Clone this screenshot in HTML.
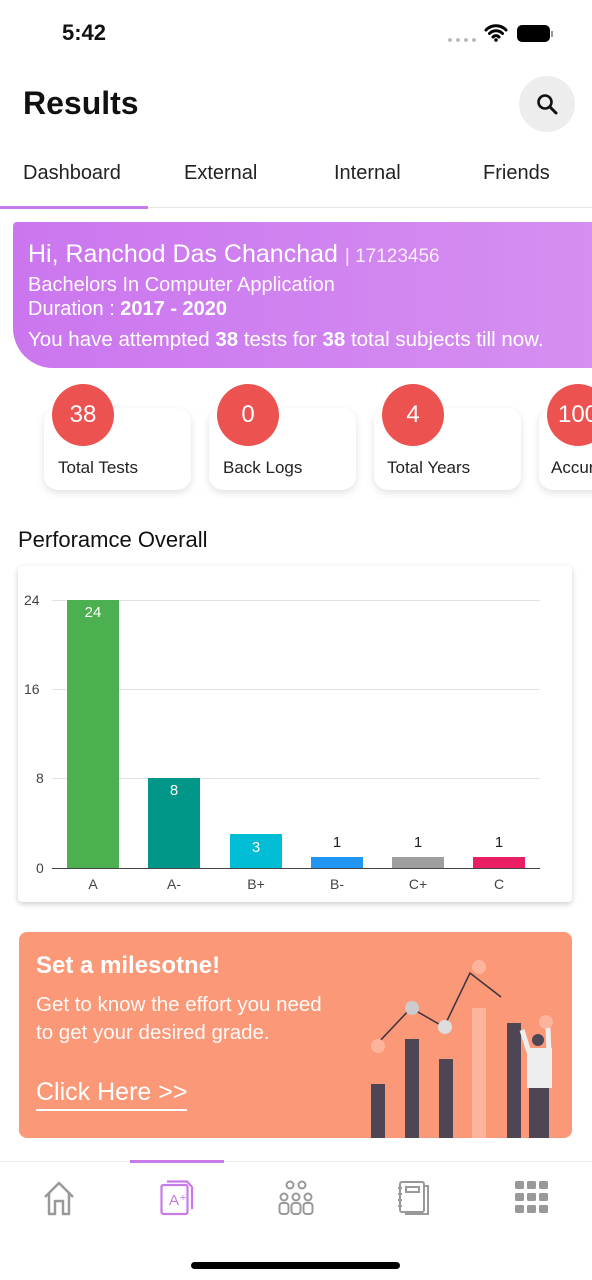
<!DOCTYPE html>
<html><head><meta charset="utf-8"><style>
*{margin:0;padding:0;box-sizing:border-box}
body{width:592px;height:1280px;background:#fff;font-family:"Liberation Sans",sans-serif;position:relative;overflow:hidden;color:#111}
.a{position:absolute}
.tab{position:absolute;top:162px;font-size:20px;color:#222}
.card{position:absolute;top:408px;width:147px;height:82px;background:#fff;border-radius:14px;box-shadow:0 3px 8px rgba(0,0,0,.12)}
.circ{position:absolute;top:384px;width:62px;height:62px;border-radius:50%;background:#ec524f;color:#fff;font-size:24px;text-align:center;line-height:62px}
.lbl{position:absolute;top:458px;font-size:17px;color:#222}
.gl{position:absolute;left:52px;width:488px;height:1px;background:#e2e2e2}
.yl{position:absolute;left:24px;font-size:14px;color:#444}
.bar{position:absolute;width:52px}
.bv{position:absolute;width:52px;text-align:center;font-size:15px;color:#222}
.xl{position:absolute;top:876px;width:52px;text-align:center;font-size:14px;color:#444}
</style></head><body>
<div class="a" style="left:62px;top:20px;font-size:22px;font-weight:bold">5:42</div>
<div class="a" style="left:448px;top:38px;width:28px;height:4px;border-top:4px dotted #bbb"></div>
<svg class="a" style="left:484px;top:24px" width="24" height="18" viewBox="0 0 24 18"><path d="M2 6a14 14 0 0 1 20 0M5.5 9.5a9 9 0 0 1 13 0M9 13a4 4 0 0 1 6 0" stroke="#000" stroke-width="3" fill="none" stroke-linecap="round"/><circle cx="12" cy="16" r="1.8"/></svg>
<div class="a" style="left:517px;top:25px;width:33px;height:17px;border-radius:5px;background:#000"></div>
<div class="a" style="left:551px;top:31px;width:2px;height:6px;background:#999"></div>
<div class="a" style="left:23px;top:85px;font-size:32px;font-weight:bold">Results</div>
<div class="a" style="left:519px;top:76px;width:56px;height:56px;border-radius:50%;background:#ededed"></div>
<svg class="a" style="left:535px;top:92px" width="24" height="24" viewBox="0 0 24 24"><circle cx="10" cy="10" r="6.5" stroke="#111" stroke-width="2.6" fill="none"/><path d="M15 15l6 6" stroke="#111" stroke-width="3" stroke-linecap="round"/></svg>
<div class="tab" style="left:23px">Dashboard</div>
<div class="tab" style="left:184px">External</div>
<div class="tab" style="left:334px">Internal</div>
<div class="tab" style="left:483px">Friends</div>
<div class="a" style="left:0;top:207px;width:592px;height:1px;background:#e5e5e5"></div>
<div class="a" style="left:0;top:206px;width:148px;height:3px;background:#c77be8"></div>
<div class="a" style="left:13px;top:222px;width:579px;height:146px;background:linear-gradient(90deg,#cb76ef,#d58ff0);border-radius:4px 0 0 40px;color:#fff">
<div class="a" style="left:15px;top:18px;font-size:25px;white-space:nowrap">Hi, Ranchod Das Chanchad <span style="font-size:19px;opacity:.85">| 17123456</span></div>
<div class="a" style="left:15px;top:52px;font-size:20px;opacity:.95;white-space:nowrap">Bachelors In Computer Application</div>
<div class="a" style="left:15px;top:76px;font-size:20px;white-space:nowrap">Duration : <b>2017 - 2020</b></div>
<div class="a" style="left:15px;top:106px;font-size:20.5px;white-space:nowrap">You have attempted <b>38</b> tests for <b>38</b> total subjects till now.</div>
</div>
<div class="card" style="left:44px"></div><div class="card" style="left:209px"></div><div class="card" style="left:374px"></div><div class="card" style="left:539px"></div>
<div class="circ" style="left:52px">38</div><div class="circ" style="left:217px">0</div><div class="circ" style="left:382px">4</div><div class="circ" style="left:547px">100</div>
<div class="lbl" style="left:58px">Total Tests</div><div class="lbl" style="left:223px">Back Logs</div><div class="lbl" style="left:387px">Total Years</div><div class="lbl" style="left:551px">Accuracy</div>
<div class="a" style="left:18px;top:527px;font-size:22px">Perforamce Overall</div>
<div class="a" style="left:18px;top:566px;width:554px;height:336px;background:#fff;border-radius:4px;box-shadow:0 2px 6px rgba(0,0,0,.2)"></div>
<div class="gl" style="top:600px"></div><div class="gl" style="top:689px"></div><div class="gl" style="top:778px"></div>
<div class="a" style="left:52px;top:868px;width:488px;height:1px;background:#444"></div>
<div class="yl" style="top:592px">24</div><div class="yl" style="top:681px">16</div><div class="yl" style="top:770px;left:36px">8</div><div class="yl" style="top:860px;left:36px">0</div>
<div class="bar" style="left:67px;top:600px;height:268px;background:#4caf50"></div>
<div class="bar" style="left:148px;top:778px;height:90px;background:#009688"></div>
<div class="bar" style="left:230px;top:834px;height:34px;background:#00bcd4"></div>
<div class="bar" style="left:311px;top:857px;height:11px;background:#2196f3"></div>
<div class="bar" style="left:392px;top:857px;height:11px;background:#9e9e9e"></div>
<div class="bar" style="left:473px;top:857px;height:11px;background:#e91e63"></div>
<div class="bv" style="left:67px;top:604px;color:#fff">24</div>
<div class="bv" style="left:148px;top:782px;color:#fff">8</div>
<div class="bv" style="left:230px;top:839px;color:#fff">3</div>
<div class="bv" style="left:311px;top:834px">1</div><div class="bv" style="left:392px;top:834px">1</div><div class="bv" style="left:473px;top:834px">1</div>
<div class="xl" style="left:67px">A</div><div class="xl" style="left:148px">A-</div><div class="xl" style="left:230px">B+</div><div class="xl" style="left:311px">B-</div><div class="xl" style="left:392px">C+</div><div class="xl" style="left:473px">C</div>
<div class="a" style="left:19px;top:932px;width:553px;height:206px;background:#fa9877;border-radius:8px;overflow:hidden;color:#fff">
<div class="a" style="left:17px;top:20px;font-size:24px;font-weight:bold;white-space:nowrap">Set a milesotne!</div>
<div class="a" style="left:17px;top:59px;font-size:20.5px;line-height:28px;opacity:.95;white-space:nowrap">Get to know the effort you need<br>to get your desired grade.</div>
<div class="a" style="left:17px;top:146px;font-size:25px;border-bottom:2px solid #fff;padding-bottom:2px;white-space:nowrap">Click Here &gt;&gt;</div>
<svg class="a" style="left:340px;top:20px" width="213" height="186" viewBox="0 0 213 186">
<rect x="12" y="132" width="14" height="54" fill="#4f4655"/><rect x="46" y="87" width="14" height="99" fill="#4f4655"/><rect x="80" y="107" width="14" height="79" fill="#4f4655"/><rect x="113" y="56" width="14" height="130" fill="#fdb49c"/><rect x="148" y="71" width="14" height="115" fill="#4f4655"/>
<path d="M18 92L52 56L85 75L111 21L142 45" stroke="#3a3340" stroke-width="1.5" fill="none"/>
<circle cx="19" cy="94" r="7" fill="#fdb49c"/><circle cx="53" cy="56" r="7" fill="#ccc"/><circle cx="86" cy="75" r="7" fill="#ddd"/><circle cx="120" cy="15" r="7" fill="#fdb49c"/><circle cx="187" cy="70" r="7" fill="#fdb49c"/>
<rect x="168" y="96" width="25" height="40" fill="#eee"/><circle cx="179" cy="88" r="6" fill="#4f4655"/><rect x="170" y="136" width="20" height="50" fill="#4f4655"/><path d="M170 100L163 78M190 100L189 76" stroke="#eee" stroke-width="5"/>
</svg>
</div>
<div class="a" style="left:0;top:1161px;width:592px;height:1px;background:#eee"></div>
<div class="a" style="left:130px;top:1160px;width:94px;height:3px;background:#c77be8"></div>
<svg class="a" style="left:42px;top:1180px" width="34" height="36" viewBox="0 0 34 36"><path d="M3 17L17 3L31 17M7 13V34H13V21H21V34H27V13" stroke="#999" stroke-width="2.5" fill="none" stroke-linejoin="round"/></svg>
<svg class="a" style="left:160px;top:1180px" width="34" height="36" viewBox="0 0 34 36"><rect x="1.5" y="5" width="26" height="29" rx="2" stroke="#c77be8" stroke-width="2.2" fill="none"/><path d="M7 1.5H27L32 7V29" stroke="#c77be8" stroke-width="2.2" fill="none"/><text x="9" y="25" font-size="15" fill="#c77be8" font-family="Liberation Sans">A⁺</text></svg>
<svg class="a" style="left:278px;top:1180px" width="36" height="36" viewBox="0 0 36 36"><g stroke="#999" stroke-width="2" fill="none"><circle cx="12" cy="5" r="3.5"/><circle cx="24" cy="5" r="3.5"/><circle cx="6" cy="17" r="3.5"/><circle cx="18" cy="17" r="3.5"/><circle cx="30" cy="17" r="3.5"/><rect x="1.5" y="23" width="9" height="11" rx="3"/><rect x="13.5" y="23" width="9" height="11" rx="3"/><rect x="25.5" y="23" width="9" height="11" rx="3"/></g></svg>
<svg class="a" style="left:396px;top:1180px" width="36" height="36" viewBox="0 0 36 36"><g stroke="#999" stroke-width="2" fill="none"><rect x="4" y="2" width="24" height="30" rx="2"/><path d="M28 6H32V34H10V32"/><rect x="10" y="7" width="13" height="5"/><path d="M2 8h4M2 14h4M2 20h4M2 26h4"/></g></svg>
<svg class="a" style="left:514px;top:1180px" width="36" height="36" viewBox="0 0 36 36" fill="#999"><rect x="1" y="1" width="9" height="8" rx="1.5"/><rect x="13" y="1" width="9" height="8" rx="1.5"/><rect x="25" y="1" width="9" height="8" rx="1.5"/><rect x="1" y="13" width="9" height="8" rx="1.5"/><rect x="13" y="13" width="9" height="8" rx="1.5"/><rect x="25" y="13" width="9" height="8" rx="1.5"/><rect x="1" y="25" width="9" height="8" rx="1.5"/><rect x="13" y="25" width="9" height="8" rx="1.5"/><rect x="25" y="25" width="9" height="8" rx="1.5"/></svg>
<div class="a" style="left:191px;top:1262px;width:209px;height:7px;border-radius:4px;background:#000"></div>
</body></html>
